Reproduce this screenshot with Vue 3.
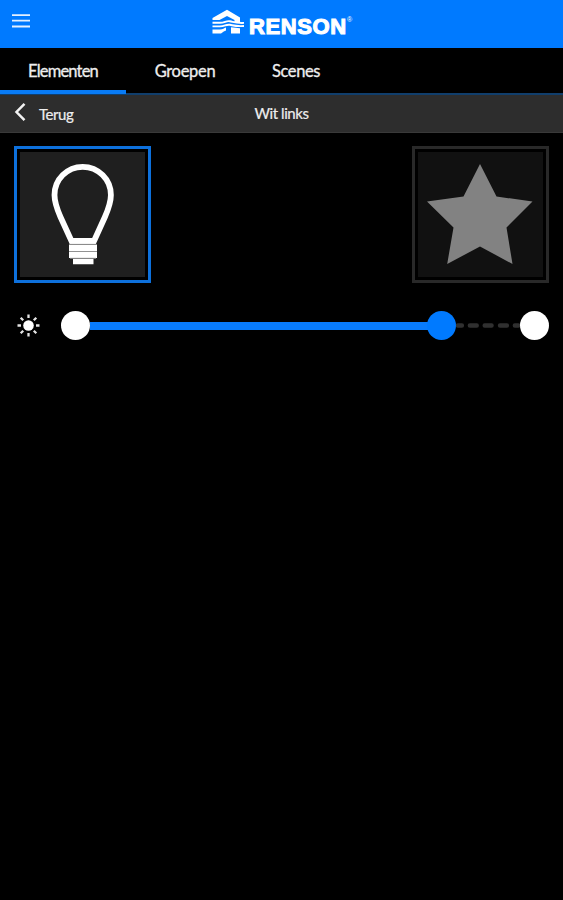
<script setup>
import { computed, ref } from 'vue'

const tabs = [
  { id: 'elements', label: 'Elementen' },
  { id: 'groups', label: 'Groepen' },
  { id: 'scenes', label: 'Scenes' },
]

const activeTab = ref('elements')
const isOn = ref(true)
const isFavorite = ref(false)
const brightness = ref(81.8)

const fillWidth = computed(() => `${brightness.value}%`)
</script>

<template>
  <div class="app">
    <header class="header">
      <button class="menu-button" aria-label="Menu">
        <svg width="18" height="15" viewBox="0 0 18 15">
          <path d="M0 1.2h18M0 6.700h18M0 12.500h18" stroke="#e4f0ff" stroke-width="1.8" />
        </svg>
      </button>

      <div class="logo">
        <svg class="logo__house" width="33" height="26" viewBox="0 0 33 26">
          <path d="M0.500 9 15 0.800 28 8.500V13H22.500V11L15 7 7.500 11H0.500z" fill="#fff" />
          <path
            d="M0.500 13.800H8C13 13.800 14 11.400 18 12.200S23 14.200 32 13.900M0.500 17.400H8C13 17.400 14 15 18 15.800S23 17.400 32 17"
            fill="none"
            stroke="#fff"
            stroke-width="1.9"
          />
          <path d="M0.500 20.500H8C11 20.500 12 19 14 18.500V21.500Q12 22 9 24.500H0.500z" fill="#fff" />
          <path d="M19 18.200 28 19.200V24.500H19z" fill="#fff" />
        </svg>
        <span class="logo__name">RENSON</span>
        <span class="logo__mark">®</span>
      </div>
    </header>

    <nav class="tabs">
      <button
        v-for="tab in tabs"
        :key="tab.id"
        class="tab"
        :class="[`tab--${tab.id}`, { 'tab--active': activeTab === tab.id }]"
        @click="activeTab = tab.id"
      >
        <span>{{ tab.label }}</span>
      </button>
    </nav>

    <div class="subheader">
      <button class="back">
        <svg width="12" height="20" viewBox="0 0 12 20">
          <path d="M10.500 1.800 2.500 10l8 8.200" fill="none" stroke="#f2f2f2" stroke-width="2.500" />
        </svg>
        <span>Terug</span>
      </button>
      <h1 class="subheader__title">Wit links</h1>
    </div>

    <main class="content">
      <div class="tiles">
        <button class="tile" :class="{ 'tile--on': isOn }" aria-label="Licht" @click="isOn = !isOn">
          <svg viewBox="0 0 125 125">
            <path
              d="M51.500 89 40.500 65C37 57 34.500 50 34.500 43a28.200 28.200 0 0 1 56.400 0C90.900 50 88.400 57 84.900 65L74 89z"
              fill="none"
              stroke="#fff"
              stroke-width="5.800"
            />
            <path d="M49 92.800h28v6.400H49zM49 99.900h28v6H49zM53 106.700h20.500v5.600H53z" fill="#fff" />
            <path d="M49 92.400h28M49 99.500h28M50 106.300h26" stroke="#999" stroke-width="0.900" />
          </svg>
        </button>

        <button
          class="tile"
          :class="{ 'tile--on': isFavorite }"
          aria-label="Favoriet"
          @click="isFavorite = !isFavorite"
        >
          <svg viewBox="0 0 125 125">
            <path
              d="M62 12 78.500 44.500 114.500 49.500 88.500 75.500 94.500 112 62 94.500 29.200 112 35.500 75.500 9 49.500 45.500 44.500z"
              fill="#828282"
            />
          </svg>
        </button>
      </div>

      <div class="dimmer">
        <svg class="dimmer__icon" width="24" height="24" viewBox="0 0 24 24">
          <circle cx="12.500" cy="11.500" r="5.300" fill="#fff" />
          <path
            d="M12.500 0.500v3.500M12.500 19v3.500M1.500 11.500H5M20 11.500h3.500M4.700 3.700l2.500 2.500M17.800 16.800l2.500 2.500M4.700 19.300l2.500-2.500M17.800 6.200l2.500-2.500"
            stroke="#e4e4e4"
            stroke-width="2.300"
          />
        </svg>
        <div class="slider">
          <span class="slider__knob"></span>
          <div class="slider__track">
            <div class="slider__fill" :style="{ width: fillWidth }">
              <span class="slider__knob slider__knob--value"></span>
            </div>
            <svg class="slider__rest" height="5" viewBox="0 0 65 5" preserveAspectRatio="none">
              <path
                d="M2 2.500H6M14 2.500H21M29 2.500H36M44.500 2.500H51.500M59.500 2.500H63"
                stroke="#303030"
                stroke-width="4.400"
                stroke-linecap="round"
              />
            </svg>
          </div>
          <span class="slider__knob"></span>
        </div>
      </div>
    </main>
  </div>
</template>

<style>
body {
  background: #000;
}
</style>

<style scoped>
.app {
  min-height: 100vh;
  background: #000;
  color: #eee;
  font-family: Lato, sans-serif;
}

button {
  padding: 0;
  border: 0;
  background: none;
  color: inherit;
  font: inherit;
  cursor: pointer;
}

svg {
  display: block;
}

/* Header */
.header {
  display: grid;
  grid-template-columns: 200px 1fr;
  height: 48px;
  background: #007aff;
}

.menu-button {
  align-self: start;
  justify-self: start;
  margin: 14px 0 0 12px;
}

.logo {
  display: flex;
  align-items: flex-start;
  padding-left: 12px;
  color: #fff;
  font-family: 'Liberation Sans', sans-serif;
}

.logo__house {
  margin-top: 9px;
}

.logo__name {
  width: 98px;
  margin: 15px 0 0 4px;
  font-size: 22px;
  font-weight: 700;
  line-height: 23px;
  letter-spacing: 0.6px;
  -webkit-text-stroke: 1.1px #fff;
}

.logo__mark {
  margin-top: 16px;
  font-size: 7px;
  line-height: 8px;
}

/* Tabs */
.tabs {
  display: flex;
  height: 47px;
  border-bottom: 2px solid #103e6c;
  box-sizing: border-box;
}

.tab {
  width: 126px;
  height: 46px;
  box-sizing: border-box;
  border-bottom: 4px solid transparent;
  font-size: 16.5px;
  line-height: 20px;
  letter-spacing: -0.8px;
  -webkit-text-stroke: 0.3px #eee;
}

.tab--groups {
  width: 118px;
  letter-spacing: -0.3px;
}

.tab--scenes {
  width: 104px;
  letter-spacing: -0.4px;
}

.tab--active {
  border-bottom-color: #087bf5;
}

.tab span {
  position: relative;
  top: 2px;
}

/* Subheader */
.subheader {
  display: grid;
  grid-template-columns: 1fr auto 1fr;
  align-items: center;
  height: 38px;
  box-sizing: border-box;
  background: #2d2d2d;
  border-bottom: 1px solid #393939;
  font-size: 15px;
  -webkit-text-stroke: 0.2px #eee;
}

.back {
  display: flex;
  align-items: center;
  gap: 13px;
  padding: 0 0 3px 14px;
}

.back span {
  padding-top: 3px;
  letter-spacing: -0.45px;
}

.subheader__title {
  margin: 0 0 1px;
  font-size: 15px;
  font-weight: 400;
  letter-spacing: -0.45px;
}

/* Tiles */
.content {
  padding: 13px 14px 0;
}

.tiles {
  display: flex;
  justify-content: space-between;
}

.tile {
  width: 137px;
  height: 137px;
  box-sizing: border-box;
  padding: 3px;
  border: 3px solid #292929;
}

.tile svg {
  width: 125px;
  height: 125px;
  background: #111;
}

.tile--on {
  border-color: #0d70dc;
}

.tile--on svg {
  background: #1f1f1f;
}

/* Dimmer */
.dimmer {
  display: flex;
  align-items: center;
  margin-top: 28px;
}

.dimmer__icon {
  margin: 0 21px 0 2px;
}

.slider {
  display: flex;
  flex: 1;
  align-items: center;
}

.slider__knob {
  flex: none;
  width: 29px;
  height: 29px;
  border-radius: 50%;
  background: #fff;
}

.slider__track {
  display: flex;
  flex: 1;
  align-items: center;
}

.slider__fill {
  display: flex;
  flex: none;
  align-items: center;
  justify-content: flex-end;
  height: 8px;
  background: #087bfc;
}

.slider__knob--value {
  margin-right: -14px;
  background: #007aff;
}

.slider__rest {
  flex: 1;
  min-width: 0;
  margin-left: 14px;
}
</style>
